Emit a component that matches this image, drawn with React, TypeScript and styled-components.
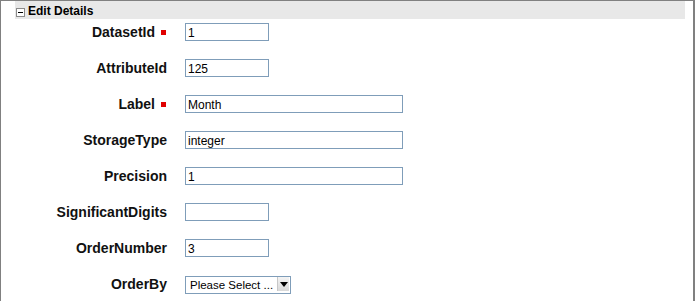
import React from "react";
import styled, { createGlobalStyle } from "styled-components";

const GlobalStyle = createGlobalStyle`
  html, body {
    margin: 0;
    padding: 0;
    background: #fff;
  }
  body {
    font-family: "Liberation Sans", Arial, sans-serif;
    color: #111;
  }
`;

type Field = {
  label: string;
  value: string;
  required?: boolean;
  wide?: boolean;
};

const fields: Field[] = [
  { label: "DatasetId", value: "1", required: true },
  { label: "AttributeId", value: "125" },
  { label: "Label", value: "Month", required: true, wide: true },
  { label: "StorageType", value: "integer", wide: true },
  { label: "Precision", value: "1", wide: true },
  { label: "SignificantDigits", value: "" },
  { label: "OrderNumber", value: "3" },
];

const App = () => {
  return (
    <>
      <GlobalStyle />
      <Frame>
        <SectionHeader>
          <ToggleBox>
            <MinusBar />
          </ToggleBox>
          <HeaderTitle>Edit Details</HeaderTitle>
        </SectionHeader>
        <FormGrid>
          {fields.map((f) => (
            <React.Fragment key={f.label}>
              <FieldLabel>
                {f.label}
                {f.required && <RequiredMark />}
              </FieldLabel>
              <TextInput wide={f.wide} defaultValue={f.value} />
            </React.Fragment>
          ))}
          <FieldLabel>OrderBy</FieldLabel>
          <SelectWrap>
            <Select defaultValue="">
              <option value="">Please Select ...</option>
            </Select>
            <SelectArrow />
          </SelectWrap>
        </FormGrid>
      </Frame>
    </>
  );
};

const Frame = styled.div`
  box-sizing: border-box;
  width: 695px;
  height: 301px;
  border-left: 1px solid #808080;
  border-top: 1px solid #808080;
  border-right: 2px solid #808080;
  overflow: hidden;
`;

const SectionHeader = styled.div`
  display: flex;
  align-items: flex-end;
  height: 18px;
  margin: 0 8px 0 14px;
  padding-bottom: 1px;
  box-sizing: border-box;
  background: #e8e8e8;
`;

const ToggleBox = styled.span`
  box-sizing: border-box;
  width: 9px;
  height: 9px;
  margin: 0 3px 1px 1px;
  border: 1px solid #8a8a8a;
  background: #fff;
  display: flex;
  align-items: center;
  justify-content: center;
`;

const MinusBar = styled.span`
  width: 5px;
  height: 1px;
  background: #000;
`;

const HeaderTitle = styled.span`
  font-size: 12px;
  line-height: 13px;
  font-weight: bold;
  color: #000;
`;

const FormGrid = styled.div`
  display: grid;
  grid-template-columns: 166px auto;
  column-gap: 18px;
  row-gap: 18px;
  justify-content: start;
  align-items: center;
  margin-top: 4px;
`;

const FieldLabel = styled.label`
  display: flex;
  align-items: center;
  justify-content: flex-end;
  font-size: 14px;
  font-weight: bold;
  color: #111;
  height: 18px;
`;

const RequiredMark = styled.span`
  width: 5px;
  height: 5px;
  margin: 1px 1px 0 6px;
  background: #e00000;
`;

type TextInputProps = {
  wide?: boolean;
};

const TextInput = styled.input<TextInputProps>`
  box-sizing: border-box;
  width: ${(props) => (props.wide ? "218px" : "84px")};
  height: 18px;
  margin: 0;
  padding: 1px 2px 0;
  border: 1px solid #7f9db9;
  font-family: "Liberation Sans", Arial, sans-serif;
  font-size: 12px;
  color: #000;
  background: #fff;
  outline: none;
`;

const SelectWrap = styled.div`
  position: relative;
  width: 106px;
  height: 18px;
`;

const Select = styled.select`
  box-sizing: border-box;
  appearance: none;
  width: 100%;
  height: 100%;
  margin: 0;
  padding: 0 0 0 4px;
  border: 1px solid #7f9db9;
  border-radius: 0;
  background: #fff;
  font-family: "Liberation Sans", Arial, sans-serif;
  font-size: 11.5px;
  color: #000;
  outline: none;
`;

const SelectArrow = styled.span`
  position: absolute;
  top: 2px;
  right: 2px;
  width: 12px;
  height: 14px;
  box-sizing: border-box;
  background: linear-gradient(#f4f4f4, #d8d8d8);
  border-left: 1px solid #c8c8c8;
  pointer-events: none;

  &::after {
    content: "";
    position: absolute;
    left: 2px;
    top: 5px;
    border-left: 4px solid transparent;
    border-right: 4px solid transparent;
    border-top: 5px solid #000;
  }
`;

export default App;
